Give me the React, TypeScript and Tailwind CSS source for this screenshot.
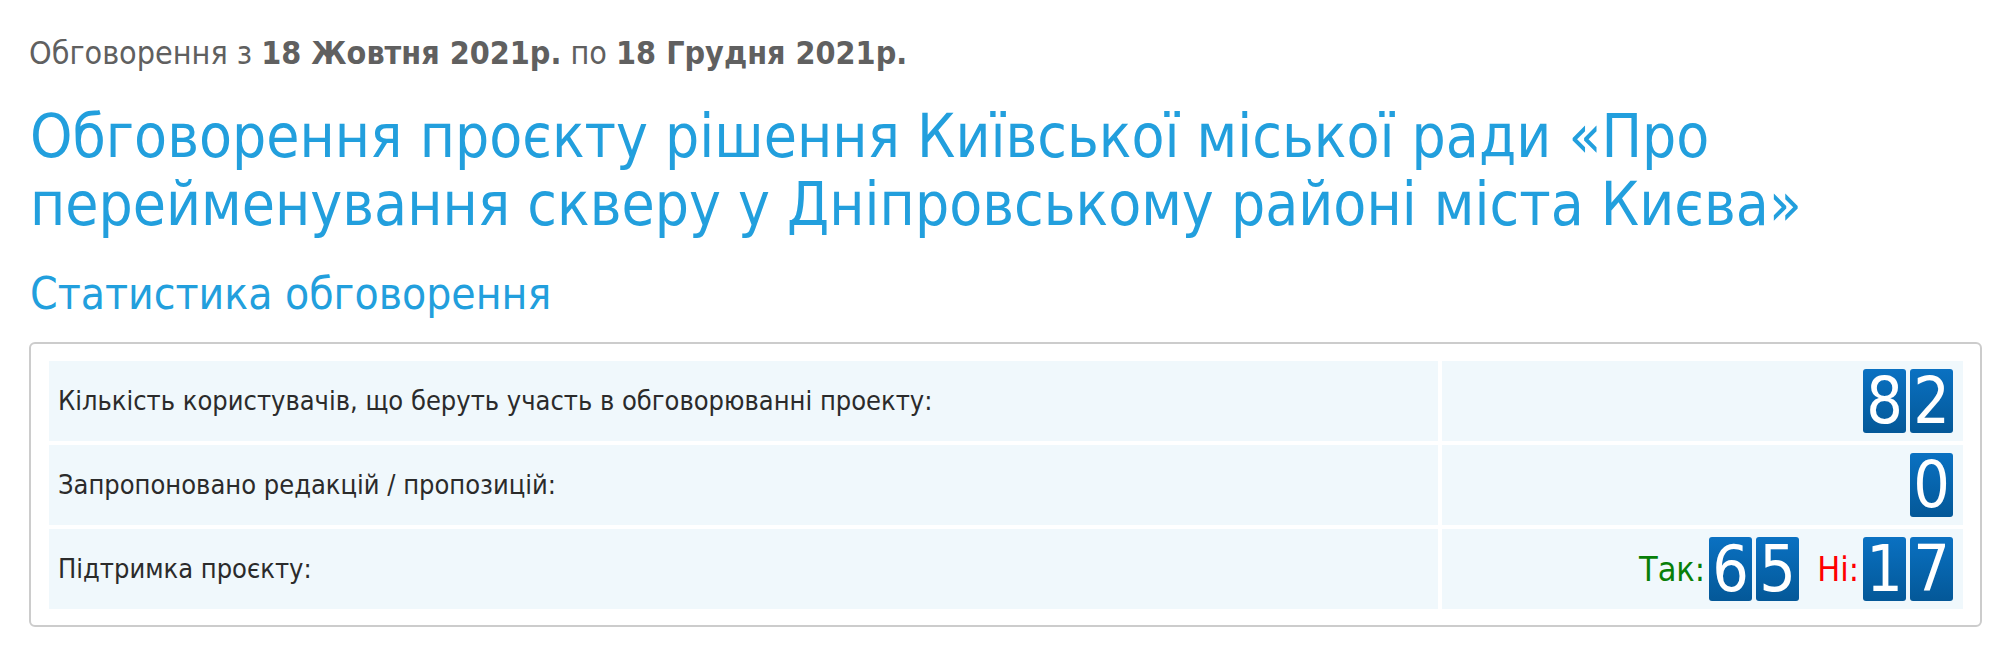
import React from 'react';

type Row = { label: string; value: React.ReactNode };

const Digits: React.FC<{ value: number }> = ({ value }) => (
  <div className="flex gap-[4px]">
    {String(value).split('').map((d, i) => (
      <span
        key={i}
        className="flex items-center justify-center w-[43px] h-[64px] rounded-[3px] bg-linear-to-b from-[#0a71c2] to-[#045898] text-white text-[64px] leading-none"
      >
        {d}
      </span>
    ))}
  </div>
);

const App: React.FC = () => {
  const rows: Row[] = [
    {
      label: 'Кількість користувачів, що беруть участь в обговорюванні проекту:',
      value: <Digits value={82} />,
    },
    {
      label: 'Запропоновано редакцій / пропозицій:',
      value: <Digits value={0} />,
    },
    {
      label: 'Підтримка проєкту:',
      value: (
        <div className="flex items-center">
          <span className="text-[34px] text-[#087f08] mr-[4px]">Так:</span>
          <Digits value={65} />
          <span className="text-[34px] text-[#ff0000] ml-[18px] mr-[4px]">Ні:</span>
          <Digits value={17} />
        </div>
      ),
    },
  ];

  return (
    <div className="min-h-screen bg-white pl-[29px] pr-[24px] pt-[33px] [font-family:'DejaVu_Sans_Condensed','DejaVu_Sans',sans-serif] [font-stretch:condensed]">
      {/* discussion dates */}
      <p className="text-[32px] leading-[40px] text-[#606060]">
        Обговорення з <b>18 Жовтня 2021р.</b> по <b>18 Грудня 2021р.</b>
      </p>

      <h1 className="mt-[29px] pl-px text-[60px] leading-[68px] text-[#229fdd]">
        Обговорення проєкту рішення Київської міської ради «Про
        <br />
        перейменування скверу у Дніпровському районі міста Києва»
      </h1>

      <h2 className="mt-[30px] pl-px text-[44px] leading-[52px] text-[#229fdd]">Статистика обговорення</h2>

      {/* stats box */}
      <div className="mt-[22px] border-2 border-[#cccccc] rounded-[6px] pl-[18px] pr-[17px] pt-[17px] pb-[16px]">
        <div className="flex flex-col gap-[4px]">
          {rows.map((row) => (
            <div key={row.label} className="grid grid-cols-[1389px_1fr] gap-[4px] h-[80px]">
              <div className="flex items-center bg-[#f0f8fc] pl-[9px] text-[27px] text-[#2b2b2b]">
                {row.label}
              </div>
              <div className="flex items-center justify-end bg-[#f0f8fc] pr-[10px]">{row.value}</div>
            </div>
          ))}
        </div>
      </div>
    </div>
  );
};

export default App;
